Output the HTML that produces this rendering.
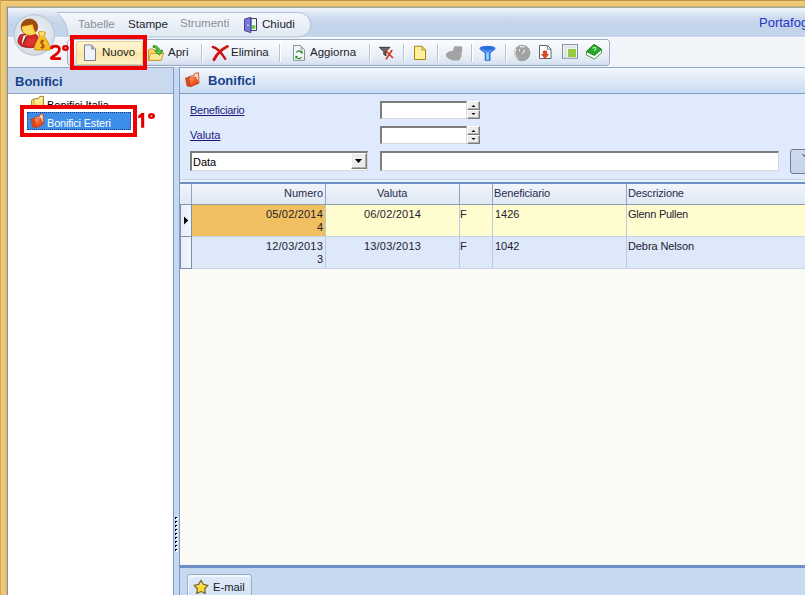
<!DOCTYPE html>
<html><head><meta charset="utf-8">
<style>
*{margin:0;padding:0;box-sizing:border-box}
html,body{width:805px;height:595px;overflow:hidden}
body{position:relative;background:#efc873;font-family:"Liberation Sans",sans-serif;font-size:11px;color:#000}
.a{position:absolute}
.t{position:absolute;white-space:nowrap;line-height:1}
.fld{background:#fff;border-top:2px solid #7c7c7c;border-left:2px solid #7c7c7c;border-bottom:1px solid #d8d8d8;border-right:1px solid #d8d8d8}
.sb{background:#ececec;border-top:1px solid #fff;border-left:1px solid #fff;border-right:1px solid #7c7c7c;border-bottom:1px solid #7c7c7c;box-shadow:inset -1px -1px 0 #b0b0b0}
</style></head><body>
<!-- outer border lines -->
<div class="a" style="left:0;top:0;width:805px;height:1px;background:#c39446"></div>
<div class="a" style="left:0;top:0;width:1px;height:595px;background:#d6a850"></div>
<div class="a" style="left:5px;top:5px;width:800px;height:1px;background:#e9c97e"></div>
<div class="a" style="left:5px;top:5px;width:1px;height:590px;background:#e6c782"></div>
<div class="a" style="left:1px;top:1px;width:804px;height:1px;background:#f0cc7e"></div>
<div class="a" style="left:1px;top:1px;width:1px;height:594px;background:#efcc80"></div>

<!-- title bar -->
<div class="a" style="left:7px;top:7px;width:798px;height:30px;background:linear-gradient(#f6f9fd,#e6eef8 12%,#cfdcee 35%,#c4d5eb 55%,#c3d4ea)"></div>
<div class="a" style="left:7px;top:37px;width:798px;height:1px;background:#fbfcfe"></div>
<div class="a" style="left:7px;top:38px;width:798px;height:29px;background:#f1f5fa"></div>
<svg class="a" style="left:0;top:0" width="805" height="70">
<defs>
<linearGradient id="mg" x1="0" y1="0" x2="0" y2="1"><stop offset="0" stop-color="#f5f8fc"/><stop offset="1" stop-color="#dfe8f3"/></linearGradient>
<linearGradient id="tg" x1="0" y1="0" x2="0" y2="1"><stop offset="0" stop-color="#fbfcfe"/><stop offset="0.6" stop-color="#eaf0f8"/><stop offset="0.9" stop-color="#dae4f2"/><stop offset="1" stop-color="#c4d4ea"/></linearGradient>
<radialGradient id="og" cx="0.5" cy="0.45" r="0.55"><stop offset="0" stop-color="#eef1f5"/><stop offset="0.8" stop-color="#dde3eb"/><stop offset="1" stop-color="#cfd7e2"/></radialGradient>
</defs>
<path d="M57,12.5 H298.5 A12.25,12.25 0 0 1 298.5,37 H68 A32,32 0 0 0 57,12.5 Z" fill="url(#mg)" stroke="#b3c0d2" stroke-width="1"/>
<path d="M69.5,39.5 H607.5 L609.5,41.5 V63.5 L607.5,65.5 H69.5 L67.5,63.5 V41.5 Z" fill="url(#tg)" stroke="#9aabc3" stroke-width="1"/>
<circle cx="34.2" cy="35" r="20.3" fill="url(#og)" stroke="#b8c3d2" stroke-width="1"/>
<!-- avatar -->
<path d="M20.5,34.8 C22,34 24,34 26,34.6 L35.5,34.2 C37,35 38,36 38,37.6 L34,47.2 C31,48 26,48 21.4,46 C19,44.5 17.8,42.5 18,40.5 C18.5,38 19.5,36 20.5,34.8 Z" fill="#d42626" stroke="#8e1010" stroke-width="0.8"/>
<path d="M23.5,35.8 L27.2,35 L24.5,41 L22.6,44.2 L22,42 Z" fill="#ffffff"/>
<path d="M25.8,35.8 L26.8,36.2 L23.6,43.8 L22.8,43 Z" fill="#303030"/>
<path d="M29,38 C31,39.5 33,39 36,37.5 L33.5,45 C30,46 27,45.5 25,44.5 Z" fill="#e84040" opacity="0.6"/>
<ellipse cx="29.4" cy="27" rx="8.3" ry="8" fill="#a04c08" stroke="#7a3804" stroke-width="0.6"/>
<path d="M21.8,26.8 C24,25.6 29,25.2 32.6,24.2 C33.2,27.5 34.5,31 36.2,33 C34,35 31.5,35.4 29.4,35.3 C25,35 21.8,32 21.8,26.8 Z" fill="#f8d040"/>
<path d="M23,28 C25,27 29,26.5 31,26.2 C31.5,29 32,31 33,33 C30,34.5 26,34 24,32 Z" fill="#fde068" opacity="0.7"/>
<path d="M38.5,32 C40.5,31.3 43.5,31.5 45.5,32.5 L44,36.8 C47,39 50,45 50.2,50 L34.3,50 C34.5,45 37,39.5 39.5,37 Z" fill="#f7c028" stroke="#d08a00" stroke-width="0.8" stroke-linejoin="round"/>
<path d="M39.5,32.6 C41,32 43,32 44.5,32.8 L43.5,35.5 L40.5,35.5 Z" fill="#fde880"/>
<path d="M44,41 C42.5,40 40.5,40.8 40.8,42.6 C41.1,44.2 44,44.2 44.2,46 C44.4,47.8 42,48.3 40.5,47.3 M42.4,39.5 V49" stroke="#b04a10" stroke-width="1.2" fill="none"/>
<!-- door icon -->
<path d="M251,18.5 H256.5 V30.5 H251 Z" fill="#eef8fb" stroke="#3c3e60" stroke-width="1"/>
<rect x="251.5" y="25.2" width="3.8" height="3.6" fill="#6cc848"/>
<path d="M244.5,19.2 L250.8,17.2 V32.6 L244.5,30.6 Z" fill="#7878dc" stroke="#34348a" stroke-width="0.9"/>
<rect x="247.5" y="24.5" width="1" height="1.6" fill="#fff"/>
<!-- nuovo doc -->
<path d="M84.5,45 H91.5 L95.5,49 V60.5 H84.5 Z" fill="#eef2fb" stroke="#7d7f86" stroke-width="1"/>
<path d="M91,45 V49.5 H95.5" fill="#9aa0ac"/>
<!-- apri folder -->
<path d="M148.5,50 L149.5,49 H153 L154,50 H158 V52 H162.8 L163.5,53 L161,60.5 H148.5 Z" fill="#fbd86a" stroke="#c49a28" stroke-width="1"/>
<path d="M150.5,53.5 H163.3 L161,60.3 H148.8 Z" fill="#fde79a" stroke="#c49a28" stroke-width="0.8"/>
<path d="M153.2,45.6 C156,45.3 158.5,46.8 159.8,50.2 L162.8,50.4 L159.4,55.2 L154.8,51 L157.6,50.8 C156.8,48.6 155,47.4 153.2,47.4 Z" fill="#58c840" stroke="#1c7a1a" stroke-width="0.8"/>
<!-- elimina X -->
<path d="M212.8,47 C216.5,47.5 220.5,51.5 225.3,58.8" stroke="#c01010" stroke-width="2.3" fill="none" stroke-linecap="round"/>
<path d="M227.3,46.5 C222,49 217.5,53 214,59.6" stroke="#d41414" stroke-width="3" fill="none" stroke-linecap="round"/>
<!-- aggiorna doc -->
<path d="M293.5,45.5 H300.5 L304.5,49.5 V60.3 H293.5 Z" fill="#f4f6fa" stroke="#8a8f9a" stroke-width="1"/>
<path d="M300.3,45.5 V49.8 H304.5" fill="#b8bcc6"/>
<path d="M296.5,52.5 C297.5,50.5 300.5,50.5 301.5,52" stroke="#1a8a1a" stroke-width="1.2" fill="none"/>
<path d="M300,52.8 L302.7,50.6 L302.6,53.8 Z" fill="#1a8a1a"/>
<path d="M301.5,57 C300.5,59 297.5,59 296.5,57.5" stroke="#1a8a1a" stroke-width="1.2" fill="none"/>
<path d="M298,56.5 L295.3,58.7 L295.4,55.5 Z" fill="#1a8a1a"/>
<!-- separators -->
<g fill="#b9c2cf"><rect x="201" y="44" width="1" height="18"/><rect x="279" y="44" width="1" height="18"/><rect x="369" y="44" width="1" height="18"/><rect x="403" y="44" width="1" height="18"/><rect x="437" y="44" width="1" height="18"/><rect x="471" y="44" width="1" height="18"/><rect x="505" y="44" width="1" height="18"/></g>
<g fill="#ffffff"><rect x="202" y="44" width="1" height="18"/><rect x="280" y="44" width="1" height="18"/><rect x="370" y="44" width="1" height="18"/><rect x="404" y="44" width="1" height="18"/><rect x="438" y="44" width="1" height="18"/><rect x="472" y="44" width="1" height="18"/><rect x="506" y="44" width="1" height="18"/></g>
<!-- filter remove -->
<path d="M379.3,47.3 H390 L386,51.5 V55.8 L383.8,54.5 V51.5 Z" fill="#6a6a6a" stroke="#222" stroke-width="0.8"/>
<path d="M385.5,50.5 L392.5,57.5 M391.8,50.5 L386.3,58.8" stroke="#d83020" stroke-width="1.6" stroke-linecap="round"/>
<!-- yellow doc -->
<path d="M414.5,46.3 H422 L425.5,49.8 V59.5 H414.5 Z" fill="#fdf0a0" stroke="#a8860e" stroke-width="1"/>
<path d="M421.8,46.3 V50 H425.5" fill="#e8c850" stroke="#a8860e" stroke-width="0.6"/>
<!-- gray blob -->
<path d="M454.5,46.2 L461.3,46.2 L462.3,47.8 L462.1,51.8 L461.3,53 L461.8,56 L459,60.4 L452.5,60.4 L448,58.4 L445.9,56 L446.2,53.4 L449,51.4 L452.8,50.8 L453.8,48 Z" fill="#a3a3a3"/>
<!-- blue funnel -->
<path d="M480,48.2 C480,45.8 495,45.8 495,48.2 C495,49.5 493.5,50.5 491.5,51.5 L490,53.5 V60.3 H485.2 V53.5 L483.5,51.5 C481.5,50.5 480,49.5 480,48.2 Z" fill="#4a90f0" stroke="#1a5ad0" stroke-width="0.9"/>
<ellipse cx="487.5" cy="48.3" rx="6" ry="1.8" fill="#2a6ee0"/>
<rect x="486.3" y="52.5" width="2.5" height="7.5" fill="#9ad0ff"/>
<!-- gray clock -->
<circle cx="522.2" cy="53" r="7.8" fill="#a3a3a3" stroke="#8a8a8a" stroke-width="0.6"/>
<path d="M516,49 A7,7 0 0 0 517.5,58.5" stroke="#fff" stroke-width="1" fill="none"/>
<path d="M520,46.8 H524.5" stroke="#fff" stroke-width="1"/>
<path d="M519.5,49.3 V51 M524.3,49.5 V51.5 L522.3,53.8" stroke="#fff" stroke-width="1" fill="none"/>
<!-- doc arrow -->
<path d="M539.5,45.5 H547.5 L551,49 V58.5 H539.5 Z" fill="#fff" stroke="#5c6474" stroke-width="1"/>
<path d="M547.3,45.5 V49.2 H551" fill="none" stroke="#5c6474" stroke-width="0.8"/>
<path d="M543.3,51 H546.7 V54.5 H548.5 L545,58.6 L541.5,54.5 H543.3 Z" fill="#e84818" stroke="#a82208" stroke-width="0.6"/>
<!-- window -->
<rect x="562.5" y="44.6" width="15" height="13.6" fill="#f6f8fa" stroke="#7f8c9c" stroke-width="1"/>
<rect x="564" y="46.2" width="12" height="2.3" fill="#dfe4ea"/>
<rect x="564" y="49" width="3" height="8" fill="#e2e2e2"/>
<rect x="568" y="49" width="8" height="8" fill="#98cc40"/>
<!-- green book -->
<path d="M586.5,51.5 L594,44.5 L601.5,49.3 V53 L594.5,59 L586.5,55 Z" fill="#f4fff0" stroke="#2a7a22" stroke-width="0.8"/>
<path d="M586.5,51.5 L594,44.5 L601.5,49.3 L594.5,55.5 Z" fill="#22a82a" stroke="#1a6e1a" stroke-width="0.8"/>
<path d="M592.5,48.5 C593.5,47 596,47 596,48.5 C596,49.5 594.5,49.8 594,51" stroke="#b8f0a0" stroke-width="1.1" fill="none"/>
</svg>
<div class="t" style="left:78px;top:18px;font-size:11.6px;color:#8b8f96">Tabelle</div>
<div class="t" style="left:128px;top:18px;font-size:11.6px;color:#1b1d2a">Stampe</div>
<div class="t" style="left:180px;top:18px;font-size:11.5px;color:#8b8f96">Strumenti</div>
<div class="t" style="left:262px;top:18px;font-size:11.6px;color:#1b1d2a">Chiudi</div>
<div class="t" style="left:759px;top:16px;font-size:13px;color:#2a32c6">Portafogli</div>
<!-- nuovo highlight -->
<div class="a" style="left:76px;top:41px;width:67px;height:24px;border:1px solid #e6cf8a;border-radius:3px;background:linear-gradient(#fef5d6,#fdedb8 44%,#fbe2a0 50%,#fce9b2 62%,#fdf2c8)"></div>
<svg class="a" style="left:0;top:0" width="120" height="70">
<path d="M84.5,45 H91.5 L95.5,49 V60.5 H84.5 Z" fill="#eef2fb" stroke="#7d7f86" stroke-width="1"/>
<path d="M91,45 V49.5 H95.5 Z" fill="#9aa0ac"/>
</svg>
<div class="t" style="left:102px;top:47px;font-size:11.5px;color:#1b1d2a">Nuovo</div>
<div class="t" style="left:168px;top:47px;font-size:11.5px;color:#1b1d2a">Apri</div>
<div class="t" style="left:231px;top:47px;font-size:11.5px;color:#1b1d2a">Elimina</div>
<div class="t" style="left:310px;top:47px;font-size:11.5px;color:#1b1d2a">Aggiorna</div>

<!-- full-width line under toolbar -->

<!-- left panel -->
<div class="a" style="left:7px;top:67px;width:167px;height:528px;background:#fff;border-top:1px solid #8fa8cc;border-right:1px solid #7d9ccc"></div>
<div class="a" style="left:7px;top:68px;width:166px;height:26px;background:#cad9ee;border-bottom:1px solid #8fa8cc"></div>
<div class="t" style="left:15px;top:75px;font-size:13px;font-weight:bold;color:#15428b">Bonifici</div>

<!-- splitter -->
<div class="a" style="left:174px;top:67px;width:5px;height:528px;background:#c6d8ef"></div>

<!-- right panel -->
<div class="a" style="left:179px;top:67px;width:626px;height:528px;background:#dfeafc;border-left:1px solid #7d9ccc;border-top:1px solid #8fa8cc"></div>
<div class="a" style="left:180px;top:68px;width:625px;height:26px;background:linear-gradient(#f3f7fc,#c9dbf1);border-bottom:1px solid #7f9cc6"></div>
<div class="t" style="left:208px;top:74px;font-size:13px;font-weight:bold;color:#15428b">Bonifici</div>


<!-- tree -->
<div class="t" style="left:47px;top:99.5px;font-size:11px;color:#000">Bonifici Italia</div>
<div class="a" style="left:27px;top:112px;width:104px;height:18px;background:#3d8ee8;outline:1px dotted #1a3a80;outline-offset:-1px"></div>
<div class="t" style="left:47px;top:118px;font-size:11px;color:#fff;letter-spacing:-0.2px">Bonifici Esteri</div>

<!-- form -->
<div class="t" style="left:190px;top:105px;font-size:11px;color:#1a1a7a;text-decoration:underline;letter-spacing:-0.25px">Beneficiario</div>
<div class="t" style="left:190px;top:130px;font-size:11px;color:#1a1a7a;text-decoration:underline">Valuta</div>
<div class="a fld" style="left:380px;top:101px;width:87px;height:18px"></div>
<div class="a" style="left:467px;top:101px;width:13px;height:18px">
<div class="a sb" style="left:0;top:0;width:13px;height:9px"></div>
<div class="a sb" style="left:0;top:9px;width:13px;height:9px"></div>
<svg class="a" style="left:0;top:0" width="13" height="18"><path d="M4.5,6 H8.5 L6.5,4 Z M4.5,12 H8.5 L6.5,14 Z" fill="#000"/></svg>
</div>
<div class="a fld" style="left:380px;top:126px;width:87px;height:18px"></div>
<div class="a" style="left:467px;top:126px;width:13px;height:18px">
<div class="a sb" style="left:0;top:0;width:13px;height:9px"></div>
<div class="a sb" style="left:0;top:9px;width:13px;height:9px"></div>
<svg class="a" style="left:0;top:0" width="13" height="18"><path d="M4.5,6 H8.5 L6.5,4 Z M4.5,12 H8.5 L6.5,14 Z" fill="#000"/></svg>
</div>
<div class="a fld" style="left:190px;top:151px;width:178px;height:20px"></div>
<div class="t" style="left:193px;top:157px;font-size:11px;color:#000">Data</div>
<div class="a sb" style="left:351px;top:153px;width:16px;height:16px"></div>
<svg class="a" style="left:351px;top:153px" width="16" height="16"><path d="M4,6 H11 L7.5,10 Z" fill="#000"/></svg>
<div class="a fld" style="left:380px;top:151px;width:399px;height:20px"></div>
<div class="a" style="left:790px;top:149px;width:30px;height:25px;border:1px solid #707c90;border-radius:3px;background:linear-gradient(#cddbef,#c4d4ea)"></div><svg class="a" style="left:800px;top:152px" width="5" height="6"><path d="M2.5,2.2 L5,4.6" stroke="#505a68" stroke-width="1.1"/></svg>

<!-- grid -->
<div class="a" style="left:180px;top:179px;width:625px;height:1px;background:#c8d5e9"></div><div class="a" style="left:180px;top:180px;width:625px;height:2px;background:#ecf2fb"></div>
<div class="a" style="left:180px;top:182px;width:625px;height:2px;background:#6d8fc1"></div>
<div class="a" style="left:180px;top:184px;width:625px;height:381px;background:#fbfaf4"></div>
<div class="a" style="left:180px;top:184px;width:625px;height:20px;background:linear-gradient(#f1f5fb,#e0e8f4)"></div>
<div class="a" style="left:180px;top:204px;width:625px;height:1px;background:#8e9cb0"></div>
<div class="a" style="left:192px;top:205px;width:133px;height:31px;background:#f0c060"></div>
<div class="a" style="left:326px;top:205px;width:479px;height:31px;background:#fffdcf"></div>
<div class="a" style="left:192px;top:237px;width:613px;height:31px;background:#dde9f9"></div>

<div class="a" style="left:180px;top:236px;width:625px;height:1px;background:#c6d3e5"></div>
<div class="a" style="left:180px;top:268px;width:625px;height:1px;background:#c6d3e5"></div>
<div class="a" style="left:191px;top:184px;width:1px;height:20px;background:#8ea4c6"></div><div class="a" style="left:180px;top:204px;width:12px;height:65px;border:1px solid #7e8eac;background:linear-gradient(90deg,#e6edf7,#f3f6fb)"></div><div class="a" style="left:180px;top:236px;width:12px;height:1px;background:#7e8eac"></div>
<div class="a" style="left:325px;top:184px;width:1px;height:20px;background:#8ea4c6"></div><div class="a" style="left:325px;top:205px;width:1px;height:63px;background:#b9c9df"></div>
<div class="a" style="left:459px;top:184px;width:1px;height:20px;background:#8ea4c6"></div><div class="a" style="left:459px;top:205px;width:1px;height:63px;background:#b9c9df"></div>
<div class="a" style="left:492px;top:184px;width:1px;height:20px;background:#8ea4c6"></div><div class="a" style="left:492px;top:205px;width:1px;height:63px;background:#b9c9df"></div>
<div class="a" style="left:626px;top:184px;width:1px;height:20px;background:#8ea4c6"></div><div class="a" style="left:626px;top:205px;width:1px;height:63px;background:#b9c9df"></div>
<div class="t" style="left:284px;top:188px;font-size:11px;color:#1e2c4c">Numero</div>
<div class="t" style="left:377px;top:188px;font-size:11px;color:#1e2c4c">Valuta</div>
<div class="t" style="left:494px;top:188px;font-size:11px;color:#1e2c4c;letter-spacing:-0.12px">Beneficiario</div>
<div class="t" style="left:628px;top:188px;font-size:11px;color:#1e2c4c;letter-spacing:-0.15px">Descrizione</div>
<svg class="a" style="left:183px;top:216px" width="6" height="9"><path d="M1,0.5 L5.2,4.5 L1,8.5 Z" fill="#000"/></svg>
<div class="t" style="left:199px;top:209px;width:124px;text-align:right;font-size:11px;color:#1e2030;letter-spacing:0.2px">05/02/2014</div>
<div class="t" style="left:199px;top:222px;width:124px;text-align:right;font-size:11px;color:#1e2030">4</div>
<div class="t" style="left:326px;top:209px;width:133px;text-align:center;font-size:11px;color:#1e2030;letter-spacing:0.2px">06/02/2014</div>
<div class="t" style="left:460px;top:209px;font-size:11px;color:#1e2030">F</div>
<div class="t" style="left:495px;top:209px;font-size:11px;color:#1e2030">1426</div>
<div class="t" style="left:628px;top:209px;font-size:11px;color:#1e2030;letter-spacing:-0.25px">Glenn Pullen</div>
<div class="t" style="left:199px;top:241px;width:124px;text-align:right;font-size:11px;color:#1e2030;letter-spacing:0.2px">12/03/2013</div>
<div class="t" style="left:199px;top:254px;width:124px;text-align:right;font-size:11px;color:#1e2030">3</div>
<div class="t" style="left:326px;top:241px;width:133px;text-align:center;font-size:11px;color:#1e2030;letter-spacing:0.2px">13/03/2013</div>
<div class="t" style="left:460px;top:241px;font-size:11px;color:#1e2030">F</div>
<div class="t" style="left:495px;top:241px;font-size:11px;color:#1e2030">1042</div>
<div class="t" style="left:628px;top:241px;font-size:11px;color:#1e2030;letter-spacing:-0.1px">Debra Nelson</div>

<!-- bottom bar -->
<div class="a" style="left:180px;top:564px;width:625px;height:1px;background:#f6f8fb"></div><div class="a" style="left:180px;top:565px;width:625px;height:3px;background:#6d8fc4"></div>
<div class="a" style="left:180px;top:568px;width:625px;height:27px;background:#c7d9f0"></div>
<div class="a" style="left:187px;top:574px;width:65px;height:25px;border:1px solid #98adc8;border-radius:3px 3px 0 0;background:linear-gradient(#dfeaf7,#d3e2f4);box-shadow:inset 1px 2px 0 #f4f8fd"></div>
<div class="t" style="left:213px;top:582px;font-size:11.2px;color:#101828">E-mail</div>

<!-- splitter grip -->
<svg class="a" style="left:175px;top:517px" width="3" height="36">
<g fill="#fff"><rect x="1" y="1" width="2" height="2"/><rect x="1" y="5" width="2" height="2"/><rect x="1" y="9" width="2" height="2"/><rect x="1" y="13" width="2" height="2"/><rect x="1" y="17" width="2" height="2"/><rect x="1" y="21" width="2" height="2"/><rect x="1" y="25" width="2" height="2"/><rect x="1" y="29" width="2" height="2"/><rect x="1" y="33" width="2" height="2"/></g><g fill="#000"><path d="M0,0 H2 V1 H1 V2 H0 Z"/><path d="M0,4 H2 V5 H1 V6 H0 Z"/><path d="M0,8 H2 V9 H1 V10 H0 Z"/><path d="M0,12 H2 V13 H1 V14 H0 Z"/><path d="M0,16 H2 V17 H1 V18 H0 Z"/><path d="M0,20 H2 V21 H1 V22 H0 Z"/><path d="M0,24 H2 V25 H1 V26 H0 Z"/><path d="M0,28 H2 V29 H1 V30 H0 Z"/><path d="M0,32 H2 V33 H1 V34 H0 Z"/></g>
</svg>


<!-- misc icons -->
<svg class="a" style="left:0;top:0" width="260" height="140">
<defs>
<linearGradient id="rf" x1="0" y1="0" x2="1" y2="1"><stop offset="0" stop-color="#ffb080"/><stop offset="0.5" stop-color="#f25a22"/><stop offset="1" stop-color="#d83010"/></linearGradient>
<linearGradient id="yf" x1="0" y1="0" x2="0" y2="1"><stop offset="0" stop-color="#fff6b0"/><stop offset="1" stop-color="#fbe070"/></linearGradient>
</defs>
<!-- header folder -->
<g transform="translate(184.5,72.5)">
<path d="M1,5.5 L5,4.5 L5.5,14 L2.5,13.5 Z" fill="#e04818" stroke="#b83010" stroke-width="0.6"/>
<path d="M4.5,4 L9.5,3 L10,1 L14,0.3 L14.5,10.5 L6,14 Z" fill="#ffd8c0" stroke="#c04010" stroke-width="0.8"/>
<path d="M4.5,5 L11,4.5 L14.3,10.6 L6,14.3 Z" fill="url(#rf)" stroke="#c03810" stroke-width="0.6"/>
</g>
<!-- tree yellow folder -->
<path d="M31.6,105.5 V101 C31.6,100 32.3,99.4 33.4,99.2 L38.6,98.4 L39.8,96.4 H43.4 V105.5 Z" fill="url(#yf)" stroke="#a07a18" stroke-width="1"/>
<path d="M33.8,99.6 V105" stroke="#c89030" stroke-width="0.9"/>
<!-- tree red folder -->
<g transform="translate(30,113.5)">
<path d="M1,5.5 L5,4.5 L5.5,14 L2.5,13.5 Z" fill="#e04818" stroke="#b83010" stroke-width="0.6"/>
<path d="M4.5,4 L9.5,3 L10,1 L13,0.3 L13.5,10.5 L6,14 Z" fill="#ffd8c0" stroke="#c04010" stroke-width="0.8"/>
<path d="M4.5,5 L10.5,4.5 L13.3,10.6 L6,14.3 Z" fill="url(#rf)" stroke="#c03810" stroke-width="0.6"/>
</g>
</svg>
<svg class="a" style="left:190px;top:576px" width="22" height="19">
<defs><linearGradient id="sg" x1="0" y1="0" x2="0" y2="1"><stop offset="0" stop-color="#fff8c0"/><stop offset="0.6" stop-color="#f8d820"/><stop offset="1" stop-color="#fde860"/></linearGradient></defs>
<path d="M11.00,4.40 L13.29,8.44 L17.85,9.38 L14.71,12.81 L15.23,17.42 L11.00,15.50 L6.77,17.42 L7.29,12.81 L4.15,9.38 L8.71,8.44 Z" fill="url(#sg)" stroke="#7a6a30" stroke-width="1.3" stroke-linejoin="round"/>
</svg>

<!-- frame inner lines -->
<div class="a" style="left:6px;top:6px;width:799px;height:1px;background:#bfb286"></div>
<div class="a" style="left:6px;top:6px;width:1px;height:589px;background:#c2b68a"></div>
<div class="a" style="left:7px;top:7px;width:798px;height:1px;background:#a6aa94"></div>
<div class="a" style="left:7px;top:7px;width:1px;height:588px;background:#8e9288"></div>
<!-- red annotation boxes -->
<div class="a" style="left:70px;top:35px;width:77px;height:35px;border:4px solid #f00000"></div>
<svg class="a" style="left:0;top:0" width="170" height="135">
<path d="M51.3,49 C51.5,46.8 53.3,46.2 55.2,46.2 C57.8,46.2 59.4,47.6 59.4,49.7 C59.4,52.2 56.8,54.3 51.4,57.6 V58.7 H60.9" fill="none" stroke="#e40000" stroke-width="2.8" stroke-linejoin="bevel"/>
<ellipse cx="65.45" cy="47.95" rx="2.2" ry="1.8" fill="none" stroke="#e40000" stroke-width="2.4"/>
<path d="M138.2,115.8 L141.4,113 H144.2 V127.8 H141.1 V117.2 L138.2,118.5 Z" fill="#e40000"/>
<ellipse cx="151.5" cy="116.05" rx="2.3" ry="1.85" fill="none" stroke="#e40000" stroke-width="2.4"/>
</svg>
<div class="a" style="left:20px;top:105px;width:117px;height:32px;border:4px solid #f00000"></div>

</body></html>
